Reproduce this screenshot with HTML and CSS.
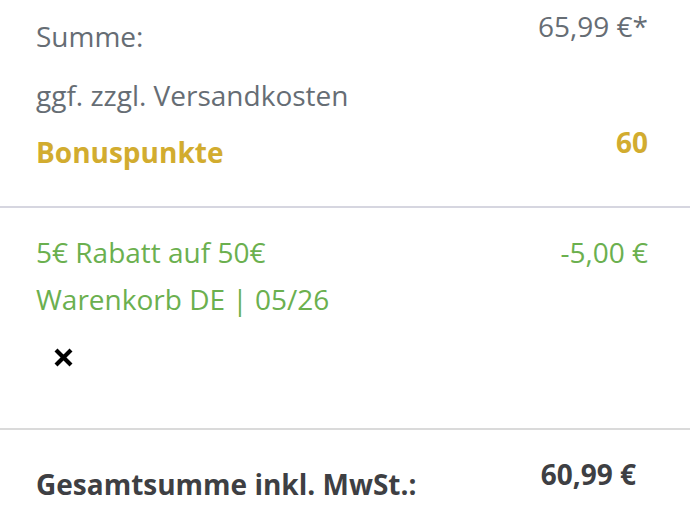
FILE: index.html
```html
<!DOCTYPE html>
<html lang="de">
<head>
<meta charset="utf-8">
<link rel="stylesheet" href="styles.css">
</head>
<body>
<div class="summary">
  <section class="block block-sum">
    <div class="row">
      <span class="label offset">Summe:</span>
      <span class="value">65,99 €*</span>
    </div>
    <div class="row row-ship">
      <span class="label">ggf. zzgl. Versandkosten</span>
    </div>
    <div class="row row-bonus">
      <span class="label bonus offset">Bonuspunkte</span>
      <span class="value bonus">60</span>
    </div>
  </section>
  <section class="block block-voucher">
    <div class="row">
      <span class="label green">5€ Rabatt auf 50€</span>
      <span class="value green">-5,00 €</span>
    </div>
    <div class="row">
      <span class="label green">Warenkorb DE | 05/26</span>
    </div>
    <button class="remove" type="button" aria-label="Entfernen">
      <svg width="19" height="19" viewBox="0 0 19 19"><path d="M2 2 L17 17 M17 2 L2 17" stroke="#000" stroke-width="4.2" stroke-linecap="butt"/></svg>
    </button>
  </section>
  <section class="block block-total">
    <div class="row">
      <span class="label total offset">Gesamtsumme inkl. MwSt.:</span>
      <span class="value total">60,99 €</span>
    </div>
  </section>
</div>
</body>
</html>
```
FILE: styles.css
```css
html, body {
  margin: 0;
  padding: 0;
  background: #fff;
}
body {
  font-family: "Open Sans", "Noto Sans", sans-serif;
  font-size: 28px;
  color: #666d74;
}
.summary {
  width: 690px;
}
.block {
  padding: 0 42px 0 36px;
}
.row {
  display: flex;
  justify-content: space-between;
  align-items: flex-start;
  line-height: 38px;
}
.offset {
  margin-top: 10px;
}
.block-sum {
  padding-top: 7px;
  padding-bottom: 35px;
  border-bottom: 2px solid #d6d6e0;
}
.row-ship {
  margin-top: 21px;
}
.row-bonus {
  margin-top: 9px;
}
.bonus {
  color: #d2ac2f;
  font-weight: 700;
}
.block-voucher {
  padding-top: 25px;
  padding-bottom: 0;
  height: 222px;
  box-sizing: border-box;
  border-bottom: 2px solid #dadada;
}
.block-voucher .row + .row {
  margin-top: 9px;
}
.green {
  color: #6bb04f;
}
.remove {
  display: block;
  margin: 30px 0 0 54px;
  margin-left: 18px;
  padding: 0;
  border: 0;
  background: none;
  width: 19px;
  height: 19px;
  line-height: 0;
}
.block-total {
  padding-top: 25px;
  padding-right: 54px;
}
.total {
  color: #3e3f43;
  font-weight: 700;
}
```
